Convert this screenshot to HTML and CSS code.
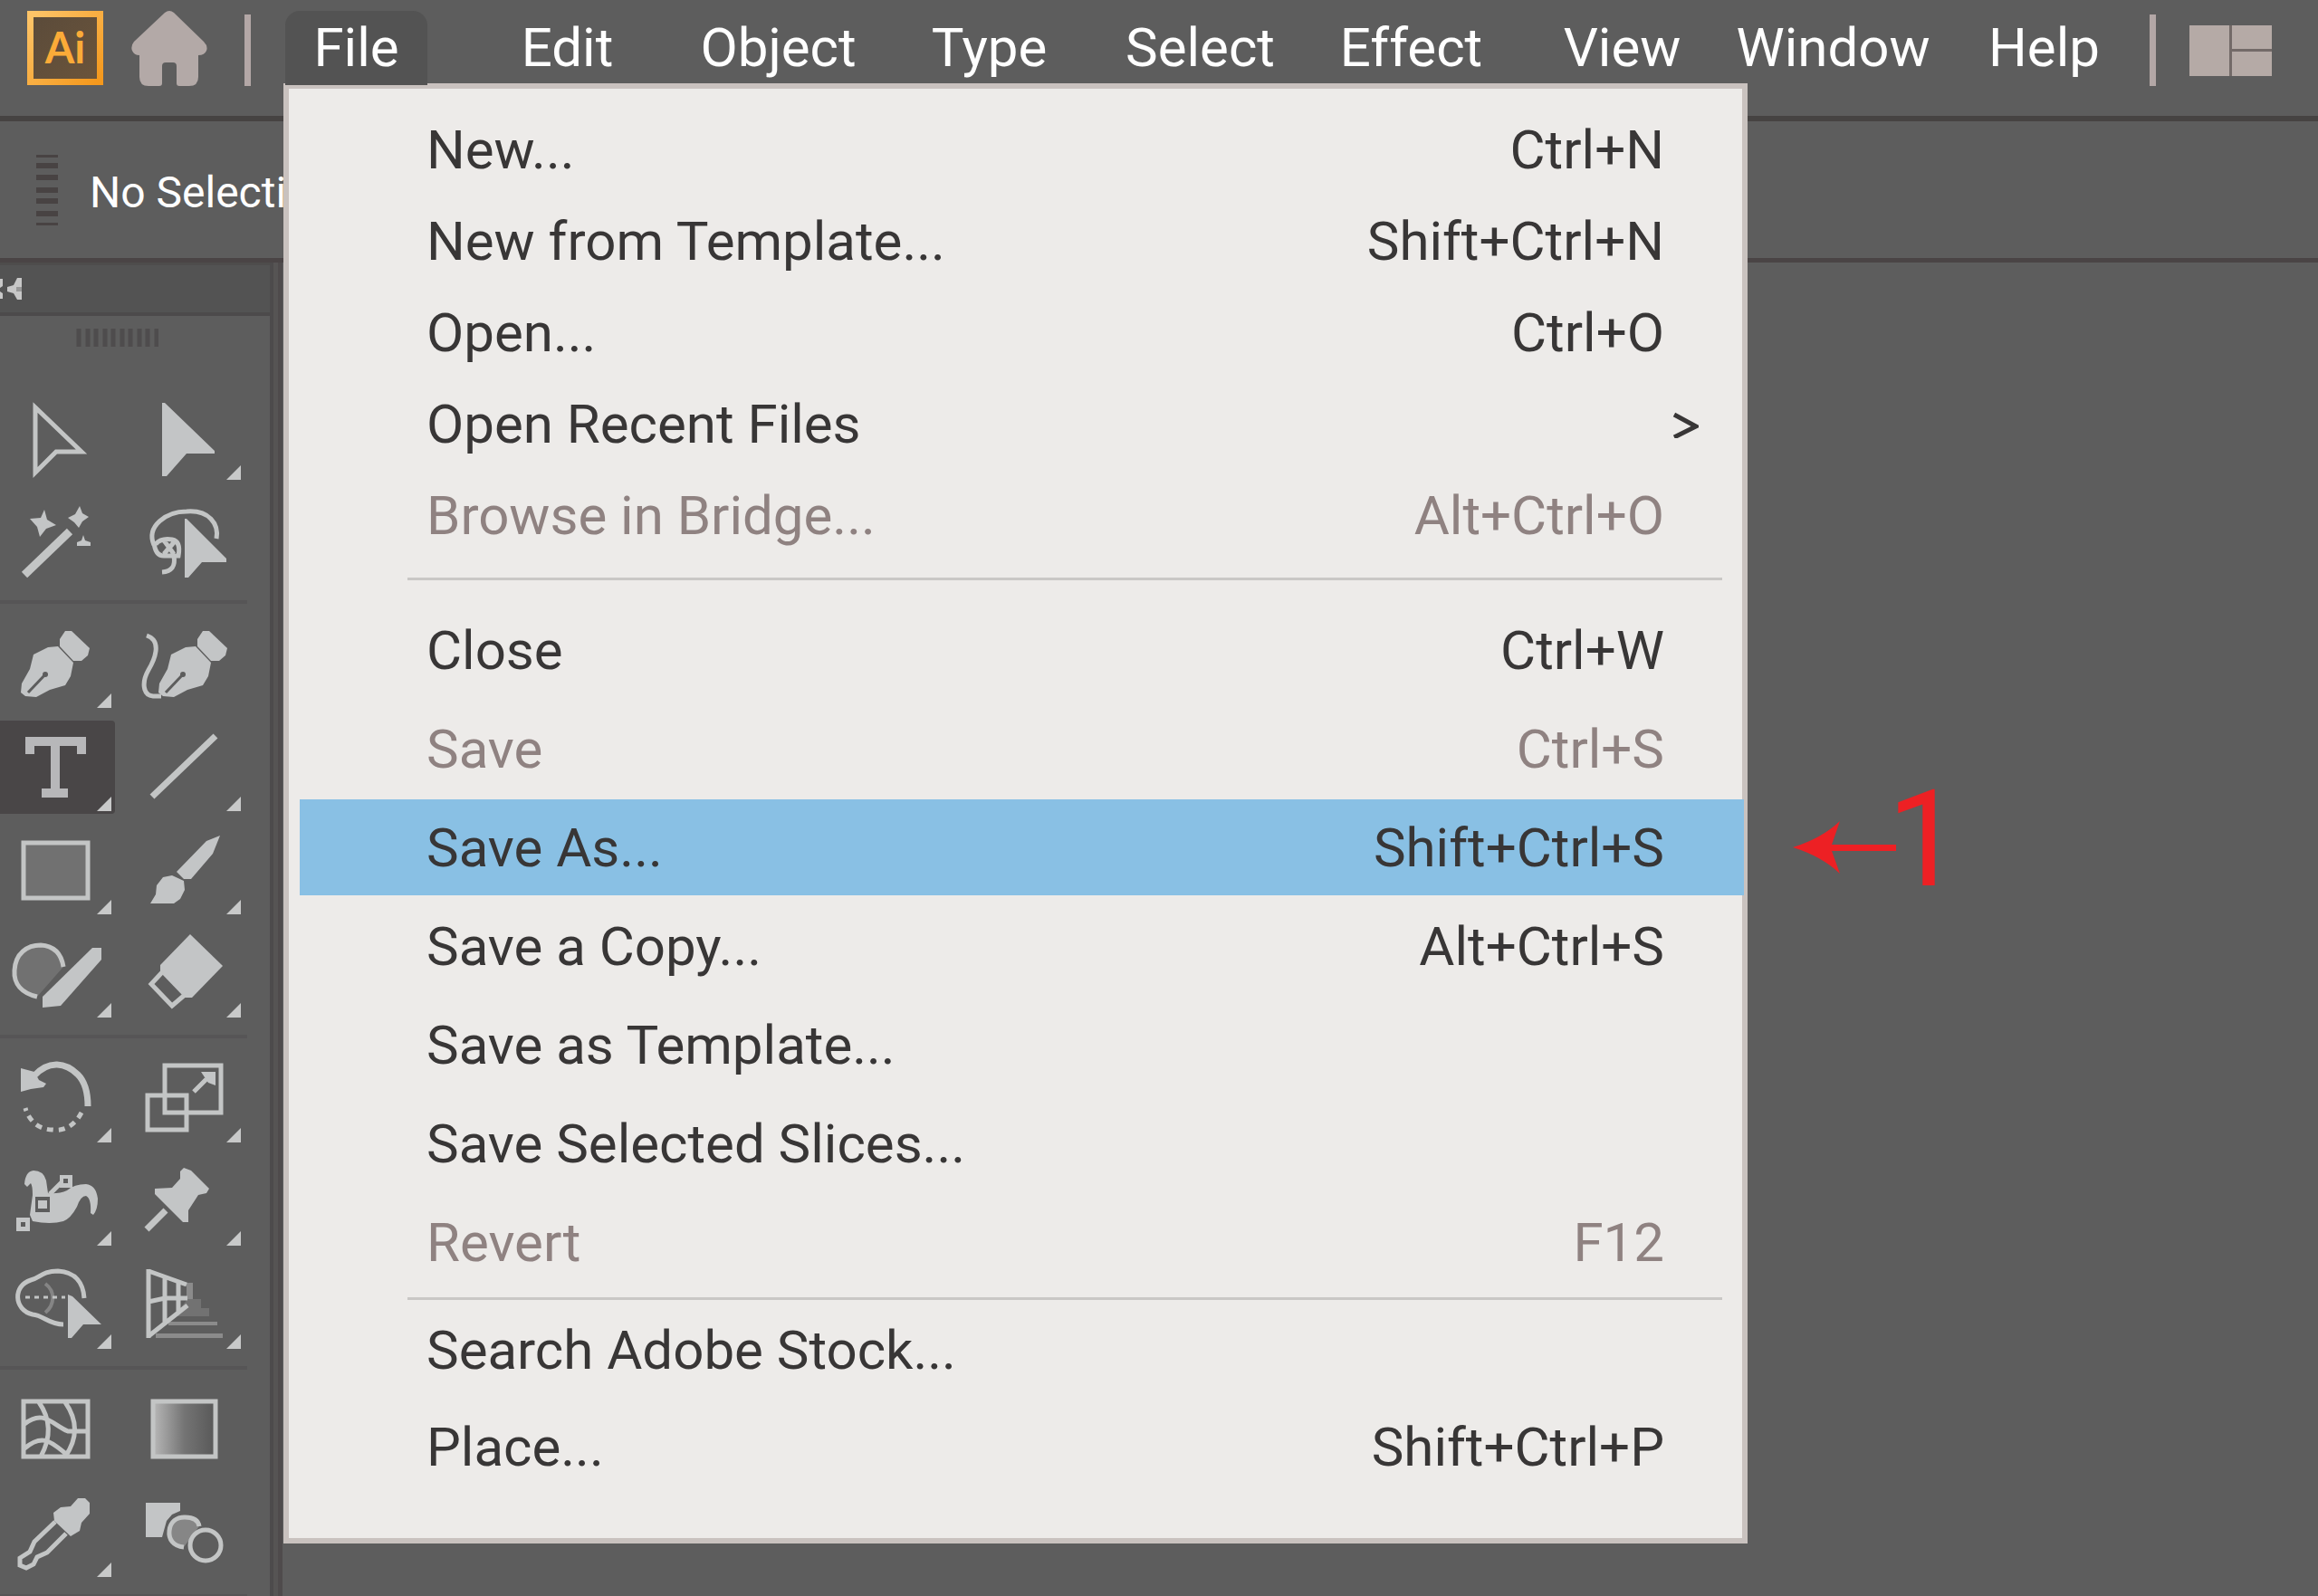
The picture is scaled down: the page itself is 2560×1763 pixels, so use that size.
FILE: index.html
```html
<!DOCTYPE html>
<html lang="en">
<head>
<meta charset="utf-8">
<meta name="viewport" content="width=device-width, initial-scale=1">
<title>Illustrator – File menu</title>
<link rel="stylesheet" href="styles.css">
</head>
<body>
<header class="menubar">
  <div class="logo">Ai</div>
  <button class="plain home" aria-label="Home">
    <svg width="84" height="84" viewBox="145 12 84 84"><path fill="#b3a9a7" d="M182 14q5-4 10 0L225 46q5 5 3 10-2 5-9 5V85q0 10-10 10H198q-3 0-3-3V73q0-4-4-4H183q-4 0-4 4V92q0 3-3 3H164q-10 0-10-10V61q-6 0-8-5-2-5 2-10Z"/></svg>
  </button>
  <span class="divider"></span>
  <ul class="menus">
    <li class="menu-slot">
      <button class="menu-title open" aria-expanded="true">File</button>
      <div class="dropdown" role="menu">
        <div class="group first">
          <button class="item" role="menuitem"><span>New...</span><span class="keys">Ctrl+N</span></button>
          <button class="item" role="menuitem"><span>New from Template...</span><span class="keys">Shift+Ctrl+N</span></button>
          <button class="item" role="menuitem"><span>Open...</span><span class="keys">Ctrl+O</span></button>
          <button class="item submenu" role="menuitem"><span>Open Recent Files</span><svg width="29" height="32" viewBox="0 0 29 32"><path d="M2 6 26 19 2 31" fill="none" stroke="currentColor" stroke-width="5"/></svg></button>
          <button class="item" role="menuitem" disabled><span>Browse in Bridge...</span><span class="keys">Alt+Ctrl+O</span></button>
        </div>
        <hr class="rule">
        <div class="group second">
          <button class="item" role="menuitem"><span>Close</span><span class="keys">Ctrl+W</span></button>
          <button class="item" role="menuitem" disabled><span>Save</span><span class="keys">Ctrl+S</span></button>
          <button class="item active" role="menuitem"><span>Save As...</span><span class="keys">Shift+Ctrl+S</span></button>
          <button class="item" role="menuitem"><span>Save a Copy...</span><span class="keys">Alt+Ctrl+S</span></button>
          <button class="item" role="menuitem"><span>Save as Template...</span></button>
          <button class="item" role="menuitem"><span>Save Selected Slices...</span></button>
          <button class="item" role="menuitem" disabled><span>Revert</span><span class="keys">F12</span></button>
        </div>
        <hr class="rule">
        <div class="group third">
          <button class="item" role="menuitem"><span>Search Adobe Stock...</span></button>
          <button class="item" role="menuitem"><span>Place...</span><span class="keys">Shift+Ctrl+P</span></button>
        </div>
      </div>
    </li>
    <li class="menu-slot"><button class="menu-title">Edit</button></li>
    <li class="menu-slot"><button class="menu-title">Object</button></li>
    <li class="menu-slot"><button class="menu-title">Type</button></li>
    <li class="menu-slot"><button class="menu-title">Select</button></li>
    <li class="menu-slot"><button class="menu-title">Effect</button></li>
    <li class="menu-slot"><button class="menu-title">View</button></li>
    <li class="menu-slot"><button class="menu-title">Window</button></li>
    <li class="menu-slot"><button class="menu-title">Help</button></li>
  </ul>
  <span class="divider"></span>
  <button class="plain workspace" aria-label="Arrange workspace">
    <svg width="91" height="56" viewBox="0 0 91 56"><path fill="#736a68" d="M0 0H91V56H0z"/><path fill="#b5aaa6" d="M0 0H44V56H0zM47 0H91V26H47zM47 29H91V56H47z"/></svg>
  </button>
</header>

<section class="options">
  <svg width="24" height="79" viewBox="40 170 24 79"><path fill="#484343" d="M40 171h24v3H40zM40 180h24v6H40zM40 193h24v6H40zM40 207h24v6H40zM40 219h24v6H40zM40 233h24v6H40zM40 246h24v3H40z"/></svg>
  <span class="status">No Selection</span>
</section>

<main class="workarea">
  <aside class="toolbar">
    <div class="tool-head">
      <button class="plain" aria-label="Collapse toolbar"><svg width="24" height="26" viewBox="0 305 24 26"><path fill="#c8c8c8" d="M0 307H3V315L0 317zM0 321 3 323V329H0zM24 306V330H19L15 323 8 321V316L15 314 19 306z"/><path fill="#999" d="M18 316h6v5h-6z"/></svg></button>
    </div>
    <svg class="tool-grip" width="91" height="20" viewBox="0 0 91 20"><path stroke="#4e4c4d" stroke-width="5" d="M3 0V20M13 0V20M22 0V20M32 0V20M41 0V20M51 0V20M60 0V20M70 0V20M79 0V20M89 0V20"/></svg>

    <div class="tools">
      <button class="tool" aria-label="Direct selection"><svg viewBox="0 429 127 103"><path class="line" d="M39 449 90 498H62L39 521Z"/></svg></button>
      <button class="tool more" aria-label="Selection"><svg viewBox="143 429 127 103"><path class="fill" d="M179 444h3L237 497v3H206L184 525h-5Z"/></svg></button>
      <button class="tool" aria-label="Magic wand"><svg viewBox="0 543 127 103"><path class="line" stroke-width="9" d="M27 634 77 586"/><path class="fill" d="M49 562l3 11 10 6-11 4-7 9-3-11-8-9 12-1ZM88 558l3 8 7 4-7 5-4 7-5-6-7-5 8-4ZM92 590l2 6 6 2v4H85v-4l5-2Z"/></svg></button>
      <button class="tool" aria-label="Lasso"><svg viewBox="143 543 127 103"><path class="line" d="M170 601C161 580 184 564 206 564 231 562 242 578 239 594"/><path class="line" d="M170 597q1 16 11 16h16q3-16-7-18-12-2-18 5M181 596l11 15M193 597l-12 14M192 613q3 17-13 18"/><path class="fill" d="M204 572h2L250 616v4H223L208 637h-4Z"/></svg></button>
    </div>
    <hr class="tool-rule">
    <div class="tools">
      <button class="tool more" aria-label="Pen"><svg viewBox="0 682 127 103"><g id="nib"><path class="fill" d="M28 769 23 765 24 755 33 739 37 723 53 715 64 714 81 732 78 747 72 757 55 762 40 770Z"/><path class="fill" d="M66 706 72 697H79L99 716 97 724 90 730H81L66 714Z"/><path d="M31 765 50 745" stroke="#5d5d5d" stroke-width="3"/><circle cx="50" cy="745" r="3" fill="#5d5d5d"/></g></svg></button>
      <button class="tool" aria-label="Curvature"><svg viewBox="143 682 127 103"><use href="#nib" x="152"/><path class="line" d="M162 702C180 708 170 730 164 740 156 754 158 768 169 769H178"/></svg></button>
      <button class="tool more selected" aria-label="Type"><svg viewBox="0 796 127 103"><path d="M33 833V819H90V833M61 819V876M46 876H75" fill="none" stroke="#b7b7b9" stroke-width="10"/></svg></button>
      <button class="tool more" aria-label="Line segment"><svg viewBox="143 796 127 103"><path class="line" stroke-width="7" d="M168 880 238 813"/></svg></button>
      <button class="tool more" aria-label="Rectangle"><svg viewBox="0 910 127 103"><path class="line shade" d="M26 931H97V992H26Z"/></svg></button>
      <button class="tool more" aria-label="Paintbrush"><svg viewBox="143 910 127 103"><path class="fill" d="M243 923 228 929 195 963 203 971H211L235 943ZM180 969 190 967 203 973 204 983 199 993 192 998H166L172 988 173 978Z"/></svg></button>
      <button class="tool more" aria-label="Shaper"><svg viewBox="0 1024 127 103"><path class="line shade" d="M41 1101C24 1097 15 1087 16 1072 17 1053 30 1044 45 1044 61 1045 68 1055 70 1068"/><path class="fill" d="M102 1047H112V1060L67 1111 47 1113V1101Z"/></svg></button>
      <button class="tool more" aria-label="Eraser"><svg viewBox="143 1024 127 103"><path class="fill" d="M210 1032 246 1067 212 1102H204L177 1074V1066Z"/><path class="line" d="M180 1073 167 1087 190 1111 204 1099"/></svg></button>
    </div>
    <hr class="tool-rule">
    <div class="tools">
      <button class="tool more" aria-label="Rotate"><svg viewBox="0 1162 127 103"><path class="line" stroke-width="7" d="M37 1189C54 1170 73 1174 86 1187 95 1196 97 1208 97 1222"/><path class="fill" d="M23 1180 38 1184 43 1193 51 1197 48 1201 34 1203 23 1206Z"/><path class="line" stroke-dasharray="7 6" d="M90 1229C80 1248 66 1249 58 1248 43 1248 32 1238 28 1224"/></svg></button>
      <button class="tool more" aria-label="Scale"><svg viewBox="143 1162 127 103"><path class="line" d="M182 1177H244V1229H182ZM163 1210H206V1248H163ZM214 1206 228 1192"/><path class="fill" d="M222 1184H238V1199L230 1196Z"/></svg></button>
      <button class="tool more" aria-label="Width"><svg viewBox="0 1276 127 103"><path class="fill" d="M27 1308Q28 1294 37 1293 48 1293 51 1304L53 1318Q65 1319 74 1315 82 1308 95 1308 106 1309 108 1324 108 1336 103 1342L100 1340Q101 1324 95 1321 89 1321 85 1333 78 1346 70 1349 56 1353 36 1349L33 1342 36 1320Q36 1310 34 1307L30 1311Z"/><path class="line" d="M55 1319 69 1305"/><path fill="#5d5d5d" d="M39 1322h16v17H39z"/><path class="fill" d="M66 1298h14v14H66zM42 1326h10v9H42zM18 1345h15v15H18z"/><path fill="#5d5d5d" d="M70 1302h5v5h-5zM23 1350h5v5h-5z"/></svg></button>
      <button class="tool more" aria-label="Puppet warp"><svg viewBox="143 1276 127 103"><path class="fill" d="M203 1290 211 1293 231 1313 228 1318 219 1320 208 1337V1350H202L171 1319V1313L190 1312 199 1302V1294Z"/><path class="line" stroke-width="7" d="M162 1358 183 1337"/></svg></button>
      <button class="tool more" aria-label="Shape builder"><svg viewBox="0 1390 127 103"><path d="M50 1418C62 1427 60 1442 50 1450" fill="none" stroke="#858585" stroke-width="4"/><path class="line" d="M70 1463C54 1463 48 1453 36 1452 15 1447 14 1420 34 1414 44 1412 46 1404 64 1404 84 1405 92 1418 93 1434"/><path class="line" stroke-width="3" stroke-dasharray="5 5" d="M28 1433H72"/><path class="fill" d="M75 1430 80 1432 112 1463H92L79 1478H75Z"/></svg></button>
      <button class="tool more" aria-label="Perspective grid"><svg viewBox="143 1390 127 103"><path fill="#8b8b8b" d="M206 1417h7v20h-7zM172 1473h74v5h-74zM186 1460h54v4h-54z"/><path fill="#727272" d="M207 1435h15v10h9v9h-39z"/><path class="line" d="M164 1402V1478M164 1404 206 1419M164 1476 207 1442M182 1409V1462M197 1414V1450M164 1438 182 1434H207"/></svg></button>
    </div>
    <hr class="tool-rule">
    <div class="tools">
      <button class="tool" aria-label="Mesh"><svg viewBox="0 1527 127 103"><path class="line" d="M26 1547H97V1608H26ZM43 1548C57 1568 56 1588 45 1608M72 1548C86 1568 86 1588 72 1608M27 1572C48 1555 58 1573 75 1580H97M27 1599C48 1581 58 1593 74 1606"/></svg></button>
      <button class="tool" aria-label="Gradient"><svg viewBox="143 1527 127 103"><defs><linearGradient id="ramp"><stop offset="0" stop-color="#b8b8b8"/><stop offset=".5" stop-color="#747474"/><stop offset="1" stop-color="#585858"/></linearGradient></defs><path class="line ramp" d="M169 1547H238V1608H169Z"/></svg></button>
      <button class="tool more" aria-label="Eyedropper"><svg viewBox="0 1641 127 103"><path class="fill" d="M86 1654H94L99 1659V1671L90 1681 88 1690 78 1696 60 1679 59 1670 67 1664 78 1663Z"/><path class="line" d="M61 1680 38 1702 33 1713 22 1720V1728L29 1731 37 1727 41 1719 52 1714 73 1693"/></svg></button>
      <button class="tool" aria-label="Blend"><svg viewBox="143 1641 127 103"><path class="fill" d="M161 1659H199V1668L190 1672 184 1679 179 1697H161Z"/><path class="line middle" d="M203 1708C191 1707 186 1699 187 1690 188 1680 195 1675 204 1675 213 1675 219 1678 220 1685"/><circle class="line front" cx="227" cy="1706" r="17"/></svg></button>
    </div>
    <hr class="tool-rule">
  </aside>
  <section class="canvas"></section>
</main>

<div class="callout">
  <svg width="114" height="58" viewBox="1980 907 114 58"><path fill="#ed2024" d="M1980 936Q2012 926 2032 907L2023 933H2094V940H2023L2032 965Q2012 946 1980 936Z"/></svg>
  <span>1</span>
</div>
</body>
</html>
```
FILE: styles.css
```css
* {
  box-sizing: border-box;
}

body {
  margin: 0;
  min-height: 100vh;
  display: flex;
  flex-direction: column;
  position: relative;
  overflow: hidden;
  background: #5d5d5d;
  color: #fff;
  font-family: Roboto, "Liberation Sans", sans-serif;
  font-size: 60px;
}

button {
  margin: 0;
  padding: 0;
  border: 0;
  background: none;
  color: inherit;
  font: inherit;
}

svg {
  display: block;
}

/* Menu bar */
.menubar {
  display: flex;
  align-items: flex-start;
  height: 134px;
  padding: 12px 51px 0 30px;
  border-bottom: 6px solid #464342;
}

.logo {
  width: 84px;
  height: 82px;
  border: 7px solid;
  border-image: linear-gradient(135deg, #fdc468, #f4981c) 1;
  background: linear-gradient(135deg, #5b4b3a, #6a543b);
  color: #fbab38;
  font: bold 47px/66px Lato, sans-serif;
  text-align: center;
}

.home {
  margin: 0 41px 0 31px;
}

.divider {
  width: 7px;
  height: 79px;
  margin-top: 4px;
  background: #b3a7a6;
}

.menus {
  flex: 1;
  display: grid;
  grid-template-columns: repeat(9, 1fr);
  margin: 0;
  padding: 0;
  list-style: none;
}

.menu-slot {
  position: relative;
  display: flex;
  justify-content: center;
}

.menu-title {
  height: 82px;
  padding-bottom: 2px;
  white-space: nowrap;
}

.menu-title.open {
  position: relative;
  z-index: 2;
  width: 157px;
  border-radius: 16px 16px 0 0;
  background: #535353;
}

.workspace {
  margin: 16px 0 0 37px;
}

/* File menu */
.dropdown {
  position: absolute;
  z-index: 1;
  top: 80px;
  left: 36px;
  width: 1617px;
  padding: 18px 0 49px 12px;
  border: 6px solid #c9c2bf;
  background: #edebe9;
  color: #383636;
}

.group {
  display: flex;
  flex-direction: column;
  gap: 3px;
}

.item {
  display: flex;
  align-items: center;
  justify-content: space-between;
  height: 98px;
  padding: 0 86px 0 140px;
  text-align: left;
  white-space: nowrap;
}

.second .item {
  height: 106px;
}

.third .item {
  height: 104px;
}

.item:disabled {
  color: #8f8281;
}

.item.submenu {
  padding-right: 48px;
}

.item.active {
  margin-right: -2px;
  padding-right: 88px;
  background: #89c0e4;
}

.rule {
  height: 3px;
  margin: 20px 22px 24px 119px;
  border: 0;
  background: #c9c7c5;
}

.second + .rule {
  margin-top: 8px;
  margin-bottom: 3px;
}

/* Options bar */
.options {
  display: flex;
  align-items: center;
  gap: 35px;
  height: 156px;
  padding-left: 40px;
  border-bottom: 5px solid #4a4445;
  font-size: 48px;
}

.status {
  padding-top: 5px;
}

/* Tool panel */
.workarea {
  flex: 1;
  display: flex;
}

.toolbar {
  width: 312px;
  border-right: 5px solid #4f4b4c;
  box-shadow: inset -5px 0 #565454, inset -9px 0 #4d4b4c;
}

.tool-head {
  display: flex;
  align-items: center;
  width: 298px;
  height: 59px;
  border-top: 3px solid #4e4c4c;
  border-bottom: 4px solid #4c4a4b;
  background: #535353;
}

.tool-grip {
  margin: 14px 0 47px 84px;
}

.tools {
  display: grid;
  grid-template-columns: 127px 127px;
  gap: 11px 16px;
}

.tool {
  position: relative;
  height: 103px;
}

.tool svg {
  width: 127px;
  height: 103px;
}

.tool.selected {
  border-radius: 0 4px 4px 0;
  background: #494647;
}

.tool.more::after {
  content: "";
  position: absolute;
  right: 4px;
  bottom: 3px;
  width: 16px;
  height: 16px;
  background: #c8c9c9;
  clip-path: polygon(100% 0, 100% 100%, 0 100%);
}

.tool-rule {
  width: 273px;
  height: 4px;
  margin: 16px 0 15px;
  border: 0;
  background: #565556;
}

.fill {
  fill: #c3c5c6;
}

.line {
  fill: none;
  stroke: #c3c5c5;
  stroke-width: 5px;
}

.line[stroke-width="3"] {
  stroke-width: 3px;
}

.line[stroke-width="7"] {
  stroke-width: 7px;
}

.line[stroke-width="9"] {
  stroke-width: 9px;
}

.shade {
  fill: #717171;
}

.middle {
  fill: #868686;
}

.front {
  fill: #5d5d5d;
}

.ramp {
  fill: url(#ramp);
}

.canvas {
  flex: 1;
}

/* Step marker laid over the canvas */
.callout {
  position: absolute;
  top: 866px;
  left: 1980px;
  display: flex;
  align-items: center;
  height: 140px;
  color: #ed2024;
  font-size: 148px;
  line-height: 124px;
}

.callout span {
  height: 140px;
  margin-left: -10px;
}
```
